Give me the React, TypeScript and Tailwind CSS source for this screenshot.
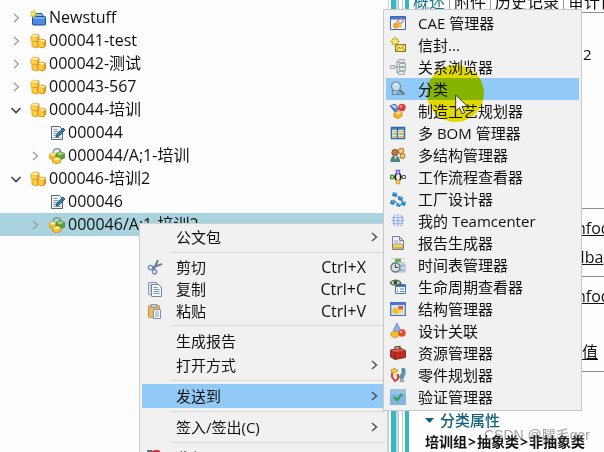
import React from "react";

type IconName =
  | "newstuff" | "item" | "form" | "revision"
  | "cut" | "copy" | "paste" | "wave"
  | "cae" | "envelope" | "relation" | "classify" | "process" | "bom" | "multi"
  | "workflow" | "factory" | "globe" | "report" | "schedule" | "lifecycle"
  | "structure" | "design" | "resource" | "part" | "verify";

const drawings: Record<IconName, React.ReactNode> = {
  newstuff: (
    <>
      <path d="M5 5V3.500h7l1 1.500v2H5z" fill="#8fb6e6" stroke="#24508f" strokeWidth=".9" />
      <rect x="2.500" y="6.500" width="13" height="8.500" rx="1" fill="#4f8bdc" stroke="#1c4f9c" />
      <path d="M3.500 8h11" stroke="#a9cdf8" />
      <path d="M3.500 0v8M0 4h7M1 1.500l5 5M6 1.500l-5 5" stroke="#d8c11c" strokeWidth="1.100" />
      <circle cx="3.500" cy="4" r="1.600" fill="#fff27a" />
    </>
  ),
  item: (
    <>
      <path d="M1 3.500L3.500 1l5.500 1v5L7 9.500 1 8z" fill="#f0a81c" stroke="#d08a14" strokeWidth=".8" />
      <path d="M1.200 3.500L3.500 1.200 8.800 2 7 4.500z" fill="#fff0a6" />
      <path d="M1.200 4l5.600 1v4l-5.600-1z" fill="#ffd44c" />
      <path d="M2 9.500L3.500 8l4.500 1v5l-1.500 1L2 13.500z" fill="#ffcf43" stroke="#d08a14" strokeWidth=".8" />
      <path d="M8 8l2-2 5.500 1v5.500L13.500 15 8 13.800z" fill="#eea01a" stroke="#c47f10" strokeWidth=".8" />
      <path d="M8.200 8L10 6.200l5.300 1L13.500 9z" fill="#fff0a6" />
      <path d="M8.300 8.600l5 1v5l-5-1.200z" fill="#ffcb3c" />
    </>
  ),
  form: (
    <>
      <path d="M2.500 1.500h8l3 3v10h-11z" fill="#f4f6f8" stroke="#5c6670" />
      <path d="M4.500 4.500h4M4.500 6.500h5M4.500 8.500h4M4.500 10.500h3M4.500 12.500h7" stroke="#8b98a5" />
      <path d="M7 12l1-3 6-6 2 2-6 6z" fill="#2d7fb4" stroke="#1a4668" strokeWidth=".8" />
    </>
  ),
  revision: (
    <>
      <path d="M4.500 6V3.500a3.500 2.800 0 0 1 7 0V6" fill="none" stroke="#7c9a9a" strokeWidth="1.400" />
      <path d="M0 6.500l4-2 4 1.500v4L4 12 0 10z" fill="#f2b92c" stroke="#c98d18" strokeWidth=".7" />
      <path d="M.5 6.500L4 4.800 7.500 6 4 8z" fill="#fff0a4" />
      <path d="M7 5.500l4-2 4.500 2V10L11 12l-4-2z" fill="#5c9f38" stroke="#3b7a26" strokeWidth=".7" />
      <path d="M7.500 5.500L11 4l4 1.500-4 2z" fill="#a9d478" />
      <path d="M3.500 11l4-2 4.500 1.500V14l-4 2-4.500-1.500z" fill="#f6c034" stroke="#c98d18" strokeWidth=".7" />
      <path d="M4 11l3.500-1.700 4 1.400L8 12.500z" fill="#fff0a4" />
    </>
  ),
  cut: (
    <>
      <path d="M11 1L6.500 11M15 5L5.500 8.500" stroke="#6d7f96" strokeWidth="2" />
      <circle cx="3.500" cy="8.500" r="2.200" fill="none" stroke="#6888b8" strokeWidth="1.300" />
      <circle cx="7.500" cy="12.800" r="2.200" fill="none" stroke="#6888b8" strokeWidth="1.300" />
    </>
  ),
  copy: (
    <>
      <path d="M1.500 1.500h8v12h-8z" fill="#e5ebf1" stroke="#8297ac" />
      <path d="M3 4h2M3 6h2M3 8h2M3 10h2" stroke="#8297ac" />
      <path d="M4.500 3.500h7l3 3v9h-10z" fill="#f4f7fa" stroke="#71879d" />
      <path d="M6.500 6.500h4M6.500 8.500h6M6.500 10.500h6M6.500 12.500h6" stroke="#7d97b4" />
    </>
  ),
  paste: (
    <>
      <rect x="1.500" y="2.500" width="11" height="12" rx="1" fill="#efb964" stroke="#c98c3d" />
      <path d="M4 1.500h6v3H4z" fill="#c7cdd5" stroke="#7d8794" strokeWidth=".8" />
      <path d="M6.500 6.500h7v9h-7z" fill="#f2f5f9" stroke="#7e91a8" />
      <path d="M8 9h4M8 11h4M8 13h4" stroke="#91a6bf" />
    </>
  ),
  wave: (
    <>
      <path d="M0 0h5v6H1z" fill="#576a78" />
      <path d="M5 1l3-1h4l2 3v5H5z" fill="#d83427" />
      <path d="M4 9l5-4 4 4v6H4z" fill="#a92a22" />
    </>
  ),
  cae: (
    <>
      <path d="M.5 1.500h15v13H.5z" fill="#f4f6fb" stroke="#3c66bc" />
      <path d="M1 2h14v2.500H1z" fill="#4778d0" />
      <path d="M3 9l3-2 3 2v3l-3 2-3-2z" fill="#f1a62f" />
      <circle cx="10" cy="11" r="2" fill="#f2c447" />
      <path d="M7 7c1-4 7-4 6-1s-4 3-5 1" fill="#e8e6ee" stroke="#c75a50" />
    </>
  ),
  envelope: (
    <>
      <path d="M5.500 7.500h10v7h-10z" fill="#fbe271" stroke="#8d741a" />
      <path d="M5.500 7.500l5 4 5-4M5.500 14.500l3.500-4M15.500 14.500L12 10.500" fill="none" stroke="#9a7d18" strokeWidth=".8" />
      <path d="M5 0v9M.5 4.500h9M2 1.500l6 6M8 1.500l-6 6" stroke="#b4a420" strokeWidth="1.300" />
      <circle cx="5" cy="4.500" r="2.200" fill="#fff06a" />
    </>
  ),
  relation: (
    <>
      <path d="M4 8h3M7 2v12M7 2.500h3M7 8h3M7 13.500h3" fill="none" stroke="#8796a1" />
      <path d="M.5 6.500h4v3h-4zM8.500 .5h6v3h-6zM9.500 4.500h6v3h-6zM9.500 8.500h6v3h-6zM8.500 12.500h6v3h-6z" fill="#e4e9ec" stroke="#8b99a3" strokeWidth=".8" />
    </>
  ),
  classify: (
    <>
      <path d="M2.500 8v5.500H14M8 13v-2h4" fill="none" stroke="#6f8795" strokeWidth="1.200" />
      <circle cx="6" cy="5.500" r="4.500" fill="#c5dded" stroke="#728796" strokeWidth="1.200" />
      <path d="M3.500 5a3 3 0 0 1 3-2" fill="none" stroke="#fff" />
      <path d="M9.500 9l5 4.500" stroke="#657886" strokeWidth="2.200" />
    </>
  ),
  process: (
    <>
      <path d="M0 3l5-2 4 5-4 3z" fill="#4a7fdc" stroke="#2853a8" strokeWidth=".7" />
      <path d="M1 3l4-1 2 4z" fill="#dbe7fd" />
      <circle cx="12" cy="4.500" r="3.700" fill="#dc3f32" />
      <circle cx="11" cy="3.500" r="1.200" fill="#ff9c8b" />
      <path d="M4 10l4-2 4 1.500V13l-4 2.500L4 14z" fill="#f4b12c" stroke="#c87d13" strokeWidth=".7" />
      <path d="M5 10l3-1.500 3.500 1.200-3 1.800z" fill="#ffe18a" />
    </>
  ),
  bom: (
    <>
      <path d="M1.500 2.500h13v11h-13z" fill="#fff" stroke="#2868b5" strokeWidth="1.500" />
      <path d="M2 4h12M7.500 3v11" stroke="#2868b5" strokeWidth="1.500" />
      <path d="M3 6.500h4M9 6.500h5" stroke="#e0b52a" strokeWidth="1.500" />
      <path d="M3 9h4M9 9h5" stroke="#7cb648" strokeWidth="1.500" />
      <path d="M3 11.500h4M9 11.500h5" stroke="#f0a53c" strokeWidth="1.500" />
    </>
  ),
  multi: (
    <>
      <circle cx="11" cy="4" r="2.700" fill="#f4d28c" stroke="#b98532" strokeWidth="1.200" />
      <circle cx="12.500" cy="9" r="2.300" fill="#f4d28c" stroke="#b98532" strokeWidth="1.200" />
      <circle cx="5" cy="5.500" r="3.200" fill="#bd7740" stroke="#7c4a26" strokeWidth=".8" />
      <path d="M.5 15c0-5 2-6.500 4.500-6.500S10 10 10 15z" fill="#4c8087" />
      <path d="M4 9l1.500 4L7 9z" fill="#efd6ac" />
    </>
  ),
  workflow: (
    <>
      <path d="M3 8h2M11 8h2M7 4L5.500 6v4L7 12M9 4l1.500 2v4L9 12" fill="none" stroke="#151515" strokeWidth="1.400" />
      <path d="M6.500 1.500h3v3h-3z" fill="#fff" stroke="#765bd2" strokeWidth="1.400" />
      <path d="M6.500 11.500h3v3h-3z" fill="#fff" stroke="#ee9c20" strokeWidth="1.400" />
      <path d="M.7 6.500h3v3h-3z" fill="#fff" stroke="#43922f" strokeWidth="1.400" />
      <path d="M12.300 6.500h3v3h-3z" fill="#fff" stroke="#55504c" />
    </>
  ),
  factory: (
    <>
      <path d="M6 4l7 7M3 9l5 4" stroke="#234c78" strokeDasharray="1.500 1" strokeWidth="1.300" />
      <path d="M3 1l4 1-1 4-4-1zM9 5l4 1-1 4-4-1zM1 9l4 1-1 4-4-1zM7 12l4 1-1 3-4-1zM12 10l4 1-1 4-4-1z" fill="#2585c4" />
      <path d="M3.500 2l2.500.5M9.500 6l2.500.5M2 10l2 .5M8 13l2 .5M13 11l2 .5" stroke="#83c5ea" />
    </>
  ),
  globe: (
    <>
      <circle cx="8" cy="7.500" r="6.500" fill="#e4ecfc" />
      <path d="M2.500 4.500h11M1.500 7.500h13M2.500 10.500h11M8 1v13M5 2c-2 4-2 7 0 11M11 2c2 4 2 7 0 11" fill="none" stroke="#8faae6" strokeWidth="1.200" strokeDasharray="2.500 .7" />
    </>
  ),
  report: (
    <>
      <path d="M2.500 1.500h7l4 4v9h-11z" fill="#eef1f8" stroke="#74819c" />
      <path d="M9.500 1.500v4h4" fill="#bdc9df" stroke="#74819c" />
      <path d="M4 6h4M4 8h7" stroke="#8f9bb4" />
      <path d="M3 9h10v5H3z" fill="#d8b64a" />
      <path d="M4 11h8" stroke="#fff0a0" />
    </>
  ),
  schedule: (
    <>
      <path d="M5 2h6v3H5z" fill="#63ad54" />
      <path d="M1 1.500h14M1 5.500h14" stroke="#b9c4b2" strokeWidth=".8" />
      <path d="M9 7h6v8H8z" fill="#dce5f2" stroke="#92a0b3" strokeWidth=".8" />
      <path d="M10 9h4M10 13h4" stroke="#5487c9" />
      <circle cx="5.500" cy="10.500" r="4.500" fill="#dce0e2" stroke="#687780" strokeWidth="1.400" />
      <path d="M5.500 7.500v3h3" fill="none" stroke="#43525c" strokeWidth="1.200" />
    </>
  ),
  lifecycle: (
    <>
      <path d="M5.500 5.500h10v9h-10z" fill="#f7faff" stroke="#4273bd" />
      <path d="M6 7h9" stroke="#4273bd" strokeWidth="2" />
      <path d="M7 10h1M10 10h4M7 12.500h1M10 12.500h4" stroke="#5581bd" />
      <path d="M0 4c3-4 8-4 11 0-3 3-8 3-11 0z" fill="#e0e9dc" stroke="#47583e" strokeWidth="1.200" />
      <circle cx="5.500" cy="3.500" r="2" fill="#2f4d35" />
    </>
  ),
  structure: (
    <>
      <path d="M.7 1.500h14.600v13H.7z" fill="#dce7fa" stroke="#426ec2" strokeWidth="1.200" />
      <path d="M1 2h14v2H1z" fill="#4779ce" />
      <path d="M2.500 8l3-2 3 2v4l-3 1.500-3-1.500z" fill="#f4be32" />
      <path d="M8 5h5v4H9z" fill="#dd5541" />
      <path d="M8 9l3-1 2 1v3l-3 1-2-1z" fill="#f8d565" />
    </>
  ),
  design: (
    <>
      <path d="M7 0l4 8-4 2-4-2z" fill="#91ade9" stroke="#5974bd" strokeWidth=".7" />
      <path d="M1 10l4-2 4 2v3l-4 2-4-2z" fill="#f4bd30" stroke="#ca861b" strokeWidth=".7" />
      <circle cx="12" cy="10" r="3.800" fill="#e2512d" />
      <circle cx="11" cy="9" r="1.200" fill="#ffb09b" />
    </>
  ),
  resource: (
    <>
      <path d="M5 4V2l5-.5V4" fill="none" stroke="#65473d" strokeWidth="1.300" />
      <path d="M.5 5L11 3.500l4.500 2v7L5 14.500.5 12z" fill="#bb2e1e" stroke="#751b13" strokeWidth=".8" />
      <path d="M1 5.500L5 7l10-1.500L11 4z" fill="#df634d" />
      <path d="M5 7v7" stroke="#741c13" strokeWidth=".8" />
    </>
  ),
  part: (
    <>
      <path d="M1 3l4-2 3 3-3 2-4-1z" fill="#f2c54d" stroke="#c2882d" strokeWidth=".7" />
      <path d="M2 6v4l3 4 3-2V7" fill="none" stroke="#d54232" strokeWidth="2" />
      <path d="M4 6h3v4H5z" fill="#fbe3a0" />
      <path d="M12 1l3 1v5l-2 4-4-1 3-4z" fill="#5c98bd" stroke="#3b6d8d" strokeWidth=".7" />
      <path d="M10 11l4 4M14 10l-4 5" stroke="#859299" strokeWidth="1.500" />
    </>
  ),
  verify: (
    <>
      <path d="M0 0h16v16H0z" fill="#83b3de" />
      <path d="M0 0h16v5H0z" fill="#98c2e6" />
      <path d="M4 8l3 3L12 5" fill="none" stroke="#2ba456" strokeWidth="2.200" />
    </>
  ),
};

function Icon({ name }: { name: IconName }) {
  return (
    <svg viewBox="0 0 16 16" className="size-4 shrink-0" aria-hidden="true">
      {drawings[name]}
    </svg>
  );
}

function Chevron({ open = false, dark = false }: { open?: boolean; dark?: boolean }) {
  return (
    <svg viewBox="0 0 12 12" className="size-3 shrink-0" fill="none" aria-hidden="true">
      {open ? (
        <path d="M1.500 4L6 8.500 10.500 4" stroke="#404040" strokeWidth="1.600" />
      ) : (
        <path d="M4 2l4.500 4L4 10" stroke={dark ? "#444" : "#9b9b9b"} strokeWidth="1.300" />
      )}
    </svg>
  );
}

type TreeNode = {
  label: string;
  icon: IconName;
  child?: boolean;
  state?: "open" | "closed";
  selected?: boolean;
};

const nodes: TreeNode[] = [
  { label: "Newstuff", icon: "newstuff", state: "closed" },
  { label: "000041-test", icon: "item", state: "closed" },
  { label: "000042-测试", icon: "item", state: "closed" },
  { label: "000043-567", icon: "item", state: "closed" },
  { label: "000044-培训", icon: "item", state: "open" },
  { label: "000044", icon: "form", child: true },
  { label: "000044/A;1-培训", icon: "revision", child: true, state: "closed" },
  { label: "000046-培训2", icon: "item", state: "open" },
  { label: "000046", icon: "form", child: true },
  { label: "000046/A;1-培训2", icon: "revision", child: true, state: "closed", selected: true },
];

function Tree() {
  return (
    <ul className="pt-[6px] text-base leading-[23px]">
      {nodes.map((node) => (
        <li
          key={node.label}
          className={`flex h-[23px] items-center whitespace-nowrap ${node.child ? "pl-[29px]" : "pl-[10px]"} ${
            node.selected ? "bg-[#a8d3df]" : ""
          }`}
        >
          {node.state ? (
            <button type="button" aria-label={node.state === "open" ? "折叠" : "展开"} className="w-5">
              <Chevron open={node.state === "open"} />
            </button>
          ) : (
            <span className="w-5" />
          )}
          <Icon name={node.icon} />
          <span className="ml-[3px]">{node.label}</span>
        </li>
      ))}
    </ul>
  );
}

type Action = { label: string; icon?: IconName; shortcut?: string; more?: boolean; active?: boolean; compact?: boolean };

const groups: Action[][] = [
  [{ label: "公文包", more: true }],
  [
    { label: "剪切", icon: "cut", shortcut: "Ctrl+X", compact: true },
    { label: "复制", icon: "copy", shortcut: "Ctrl+C", compact: true },
    { label: "粘贴", icon: "paste", shortcut: "Ctrl+V", compact: true },
  ],
  [{ label: "生成报告" }, { label: "打开方式", more: true }],
  [{ label: "发送到", more: true, active: true }],
  [{ label: "签入/签出(C)", more: true }],
  [{ label: "收起/展开", icon: "wave" }],
];

function ContextMenu() {
  return (
    <div role="menu" className="absolute left-[139px] top-[223px] w-[249px] border border-[#cfcfcf] bg-[#f1f1f2] px-[2px] pt-px text-[15px]">
      {groups.map((group, index) => (
        <React.Fragment key={group[0].label}>
          {index > 0 && (
            <div className="flex h-[7px] items-center pl-[29px]">
              <hr className="grow border-[#d6d6d6]" />
            </div>
          )}
          {group.map((action) => (
            <button
              key={action.label}
              type="button"
              role="menuitem"
              className={`flex w-full items-center px-[5px] text-left ${action.compact ? "h-[22px]" : "h-6"} ${
                action.active ? "bg-[#91c9f7]" : ""
              }`}
            >
              <span className="w-[29px]">{action.icon && <Icon name={action.icon} />}</span>
              <span className="grow">{action.label}</span>
              {action.shortcut && <span className="pr-[14px] text-base">{action.shortcut}</span>}
              {action.more && <Chevron dark />}
            </button>
          ))}
        </React.Fragment>
      ))}
    </div>
  );
}

const targets: { label: string; icon: IconName }[] = [
  { label: "CAE 管理器", icon: "cae" },
  { label: "信封...", icon: "envelope" },
  { label: "关系浏览器", icon: "relation" },
  { label: "分类", icon: "classify" },
  { label: "制造工艺规划器", icon: "process" },
  { label: "多 BOM 管理器", icon: "bom" },
  { label: "多结构管理器", icon: "multi" },
  { label: "工作流程查看器", icon: "workflow" },
  { label: "工厂设计器", icon: "factory" },
  { label: "我的 Teamcenter", icon: "globe" },
  { label: "报告生成器", icon: "report" },
  { label: "时间表管理器", icon: "schedule" },
  { label: "生命周期查看器", icon: "lifecycle" },
  { label: "结构管理器", icon: "structure" },
  { label: "设计关联", icon: "design" },
  { label: "资源管理器", icon: "resource" },
  { label: "零件规划器", icon: "part" },
  { label: "验证管理器", icon: "verify" },
];

function SendToMenu() {
  return (
    <div role="menu" className="absolute left-[383px] top-[9px] w-[199px] border border-[#c8c8c8] bg-[#f1f1f2] p-[2px] text-[15px]">
      {targets.map(({ label, icon }) => (
        <button
          key={label}
          type="button"
          role="menuitem"
          className={`flex h-[22px] w-full items-center gap-3 whitespace-nowrap pl-1 text-left ${
            label === "分类" ? "bg-[#91c9f7]" : ""
          }`}
        >
          <Icon name={icon} />
          {label}
        </button>
      ))}
    </div>
  );
}

function Splitter() {
  return (
    <div className="flex w-[21px] shrink-0 border-l border-[#d0d0d0] pl-[2px]">
      <div className="w-[5px] bg-[#35b9c0]" />
      <div className="w-[2px] bg-[#c4dfea]" />
      <div className="mr-[2px] w-[5px] border-x border-[#c6c6c6]" />
      <div className="w-1 bg-[#35b9c0]" />
    </div>
  );
}

const tabs = ["概述", "附件", "历史记录", "审计日志"];
const classPath = ["培训组", "抽象类", "非抽象类"];

function Details() {
  return (
    <section className="flex min-w-0 grow flex-col overflow-hidden whitespace-nowrap">
      <div className="flex h-[13px] shrink-0 items-end border-b border-[#8f8f8f]">
        {tabs.map((tab, index) => (
          <button
            key={tab}
            type="button"
            className={`shrink-0 border-r border-[#9a9a9a] px-1 text-base leading-5 ${index === 0 ? "text-[#187a90]" : ""}`}
          >
            {tab}
          </button>
        ))}
      </div>
      <div className="h-[196px] shrink-0 border-b border-[#8f8f8f] pl-36 pt-[30px] text-[15px] leading-[22px]">
        <p>培训2</p>
      </div>
      <div className="h-[68px] shrink-0 border-b border-[#8f8f8f] pt-2 text-base leading-[22px]">
        <p className="pl-[163px]"><a href="#owner" className="underline">infodba</a></p>
        <p className="pl-[137px] pt-[7px]"><a href="#group" className="underline">infodba</a></p>
      </div>
      <div className="h-[95px] shrink-0 border-b border-[#8f8f8f] pt-2 text-base leading-[22px]">
        <p className="pl-[163px]"><a href="#modifier" className="underline">infodba</a></p>
        <p className="pl-[141px] pt-[34px]"><a href="#values" className="underline">属性值</a></p>
      </div>
      <div className="pl-4 pt-[37px]">
        <button type="button" className="flex items-center gap-[6px] text-[15px] font-medium leading-[22px] text-[#116078]">
          <svg viewBox="0 0 9 5" className="h-[5px] w-[9px]" aria-hidden="true">
            <path d="M0 0h9L4.500 5z" fill="#116078" />
          </svg>
          分类属性
        </button>
        <p className="flex text-[14px] font-bold leading-[22px]">
          {classPath.map((name, index) => (
            <React.Fragment key={name}>
              {index > 0 && <span className="px-px">&gt;</span>}
              <span>{name}</span>
            </React.Fragment>
          ))}
        </p>
      </div>
    </section>
  );
}

function Pointer() {
  return (
    <div className="pointer-events-none absolute inset-0 mix-blend-multiply">
      <div className="absolute left-[427px] top-[65px] size-[57px] rounded-full bg-[#eee500]" />
    </div>
  );
}

function Arrow() {
  return (
    <svg viewBox="0 0 14 21" className="pointer-events-none absolute left-[455px] top-[94px] h-[21px] w-[14px]" aria-hidden="true">
      <path d="M.7 1v16l3.800-3.500 2.600 6.300 2.600-1.100L7 12.500h5.500z" fill="#fff" stroke="#222" strokeWidth=".9" />
    </svg>
  );
}

export default function App() {
  return (
    <main className="relative flex h-screen overflow-hidden bg-[#fdfdfd] font-['Open_Sans','Noto_Sans_CJK_SC',sans-serif] text-[#111]">
      <div className="w-[388px] shrink-0">
        <Tree />
      </div>
      <Splitter />
      <Details />
      <ContextMenu />
      <SendToMenu />
      <Pointer />
      <Arrow />
      <span className="absolute bottom-[6px] right-[14px] font-['Liberation_Sans','Noto_Sans_CJK_SC',sans-serif] text-[14px] leading-[22px] text-[#777]/70">
        CSDN @腿毛ger
      </span>
    </main>
  );
}
